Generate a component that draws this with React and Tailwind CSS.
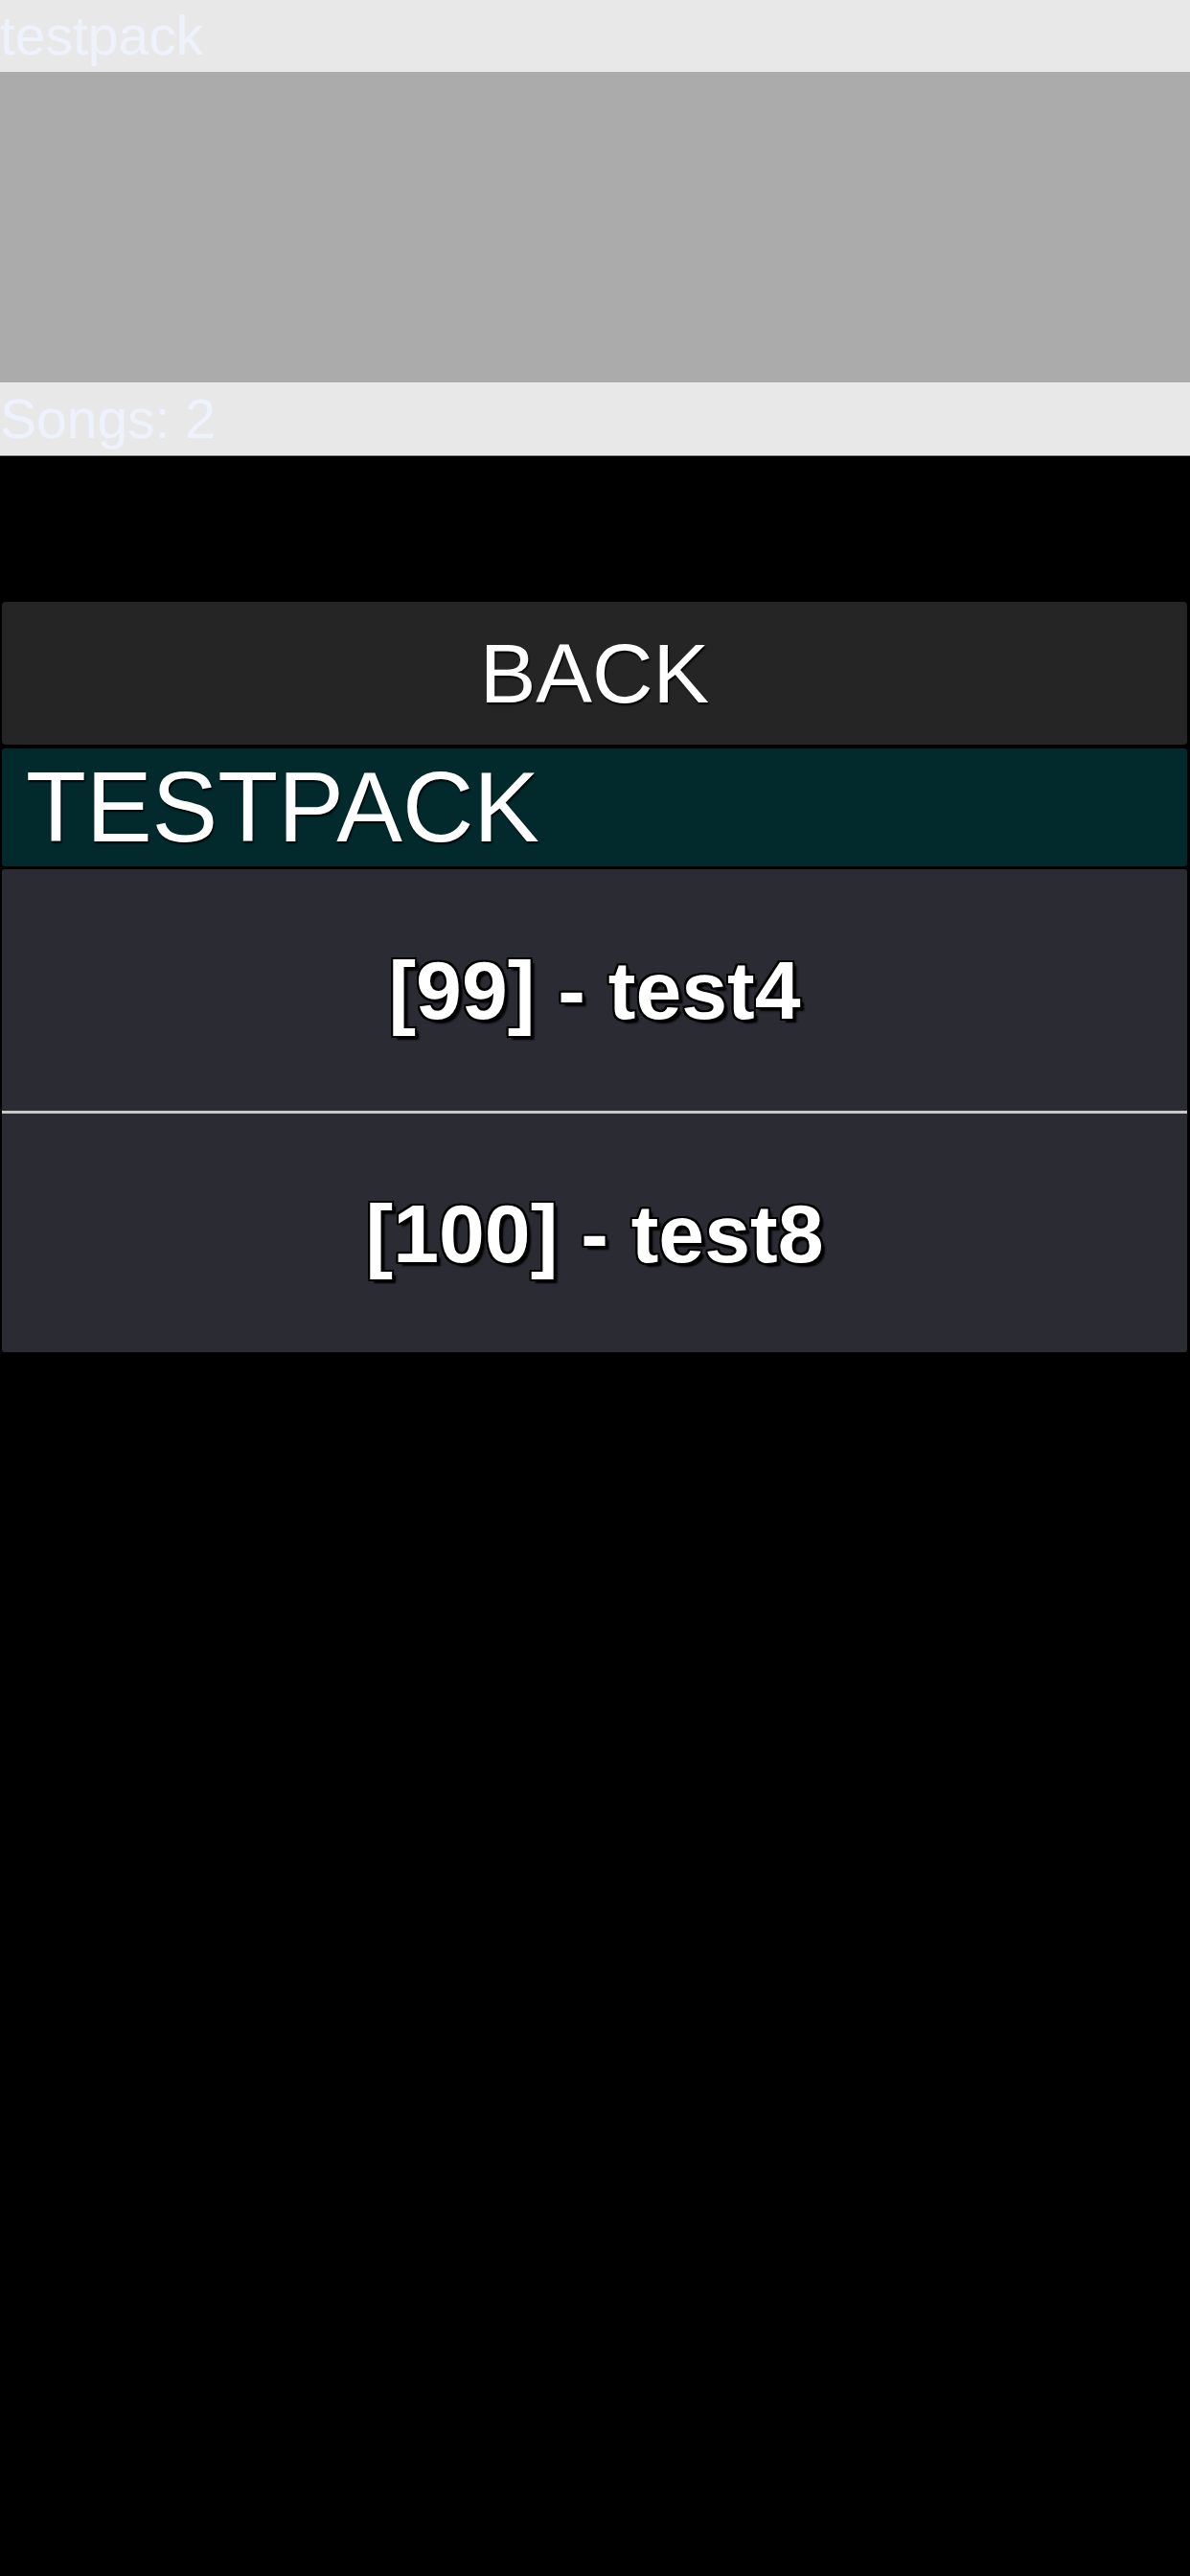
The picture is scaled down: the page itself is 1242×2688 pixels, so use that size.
const SONGS = [
  { id: 99, title: 'test4' },
  { id: 100, title: 'test8' },
];

function SongRow({ song, first }) {
  return (
    <div
      className={
        'flex h-[252px] items-center justify-center ' +
        (first ? '' : 'border-t-[3px] border-[#c9c9cc]')
      }
    >
      <span className="text-[86px] leading-none font-bold text-white [text-shadow:-2px_-2px_0_#000,2px_-2px_0_#000,-2px_2px_0_#000,2px_2px_0_#000,0_-2px_0_#000,0_2px_0_#000,-2px_0_0_#000,2px_0_0_#000,4px_4px_2px_#000]">
        [{song.id}] - {song.title}
      </span>
    </div>
  );
}

export default function App() {
  return (
    <div className="min-h-[2688px] bg-black font-['Liberation_Sans',Arial,sans-serif]">
      {/* pack header */}
      <div className="h-[75px] bg-[#e8e8e8] text-[57px] leading-[75px] text-[#eef2fb] whitespace-nowrap">
        testpack
      </div>
      <div className="h-[324px] bg-[#ababab]" />
      <div className="h-[77px] bg-[#e8e8e8] border-b border-[#8c8c8c] text-[57px] leading-[76px] text-[#eef2fb] whitespace-nowrap">
        Songs: 2
      </div>

      {/* list */}
      <div className="mt-[152px] ml-[2px] mr-[3px] flex flex-col">
        <button className="h-[149px] w-full rounded-[4px] bg-[#252525] text-[88px] leading-none text-white [text-shadow:1px_2px_2px_#000]">
          BACK
        </button>

        <div className="mt-[4px] flex h-[123px] items-center rounded-[3px] bg-[#022a2c] pl-[25px] text-[103px] leading-none text-white [text-shadow:1px_2px_2px_#000]">
          TESTPACK
        </div>

        <div className="mt-[3px] rounded-[3px] bg-[#2b2b33]">
          {SONGS.map((s, i) => (
            <SongRow key={s.id} song={s} first={i === 0} />
          ))}
        </div>
      </div>
    </div>
  );
}
